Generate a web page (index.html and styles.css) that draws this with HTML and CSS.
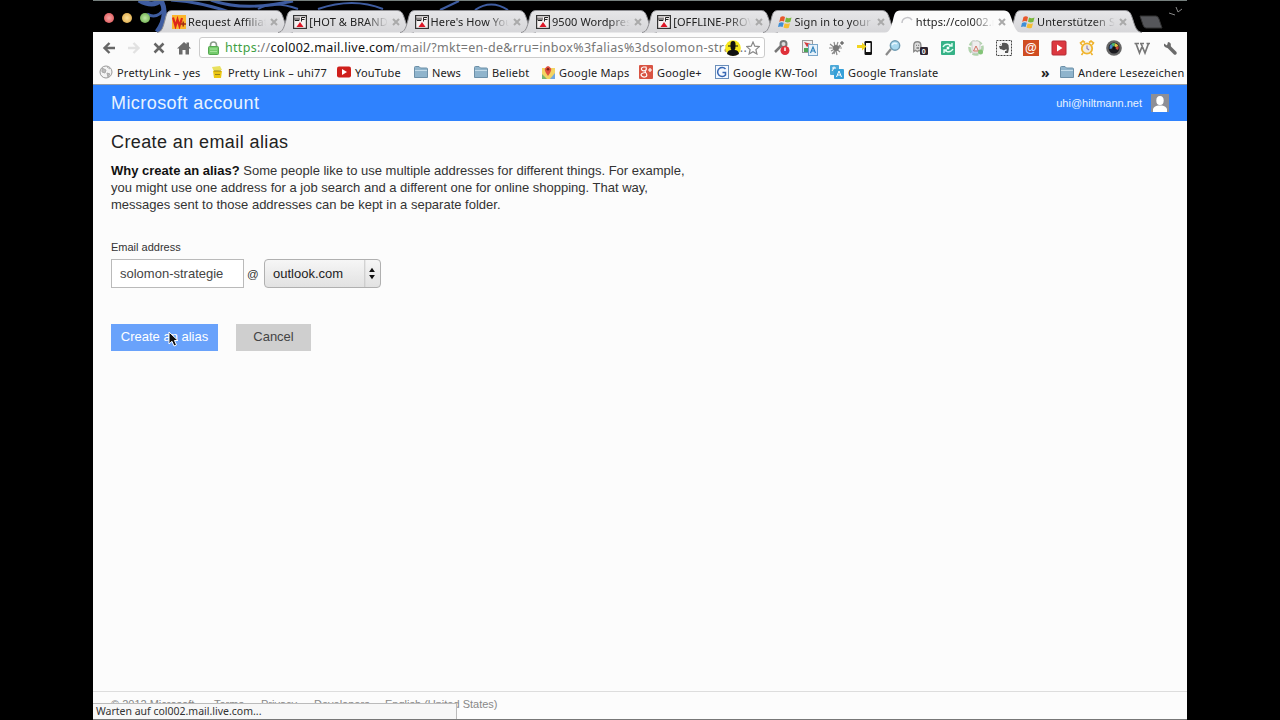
FILE: index.html
```html
<!DOCTYPE html>
<html lang="en">
<head>
  <meta charset="UTF-8" />
  <title>Create an email alias</title>
  <link rel="stylesheet" href="styles.css">
</head>
<body>
  <svg class="defs">
    <linearGradient id="tabFill" x1="0" y1="0" x2="0" y2="1"><stop offset="0" stop-color="#e6e6e8" /><stop offset="1" stop-color="#d6d6d9" /></linearGradient>
    <symbol id="tab" viewBox="0 0 137 23"><path d="M0 22.5C5 22 6 17 8 10C9.500 4 10 .5 15 .5H119C124 .5 125 4 127 10C129 17 131 22 136 22.500" fill="url(#tabFill)" stroke="#8f8f93" /></symbol>
    <symbol id="tabOn" viewBox="0 0 137 23"><path d="M0 23C5 22 6 17 8 10C9.500 4 10 .5 15 .5H119C124 .5 125 4 127 10C129 17 131 22 136 23" fill="#fbfbfb" /></symbol>
    <symbol id="close" viewBox="0 0 8 8"><path d="M1 1L7 7M7 1L1 7" stroke="#aaa" stroke-width="2" /></symbol>
    <symbol id="wf" viewBox="0 0 14 14"><rect x=".6" y=".6" width="12.800" height="12.800" fill="#f6f0f0" stroke="#333" stroke-width="1.200" /><path d="M2 2.500V5.500H6V2.500M4 2.500V5.500M8.500 6.500V2.500H12M8.500 4.500H11.500" stroke="#222" fill="none" /><path d="M7 7L10.500 12H3.500Z" fill="#dd1626" /></symbol>
    <symbol id="win" viewBox="0 0 14 14"><path d="M2.500 2Q5 .5 7 2L6 6.500Q3.500 5.500 1.200 7Z" fill="#e8572b" /><path d="M8 2.500Q10.500 4 13.500 2.500L12.300 7Q9.500 8 7 6.800Z" fill="#79b83c" /><path d="M1 8Q3.500 6.500 5.800 7.800L4.600 12Q2.500 10.800 0 12Z" fill="#3f8ed5" /><path d="M6.700 8.200Q9 9.500 12 8.200L10.800 12.800Q8 14 5.500 12.600Z" fill="#f5bd32" /></symbol>
    <symbol id="folder" viewBox="0 0 14 13"><path d="M.5 12V2Q.5 1 1.500 1H5L6.500 2.500H12.500Q13.500 2.500 13.500 3.500V12Z" fill="#8fb4cc" stroke="#6d90a8" /><path d="M1 5H13" stroke="#c3dbe9" /></symbol>
  </svg>
  <div class="window">
    <div class="tabstrip">
      <svg class="wallpaper" viewBox="0 0 1094 32"><g fill="none" stroke="#3e5ca0" stroke-width="3"><path d="M46 0Q60 8 68 0M64 32Q76 16 68 0" stroke-width="5" /><path d="M54 14Q64 20 72 8M78 0Q110 2 142 14M118 0Q150 12 200 1" /><path d="M165 9Q180 0 205 9M225 9Q260 -3 290 9" stroke-width="2" /><path d="M347 10L366 1M382 10Q398 -1 415 10" stroke-width="2" /></g><path d="M0 .5H1094" stroke="#76807e" /><path d="M1076 13L1082 15M1083 7L1085 12L1089 9" stroke="#888" fill="none" /></svg>
      <div class="lights"><i class="red"></i><i class="yellow"></i><i class="green"></i></div>
      <div class="tabs">
        <div class="tab"><svg class="shape"><use href="#tab" /></svg><svg class="fav" viewBox="0 0 14 14"><rect width="14" height="14" fill="#fbb62c" /><path d="M1 2.500L3.500 11L5.500 4.500L7.500 11L10 3" fill="none" stroke="#dd2719" stroke-width="2.200" /><path d="M8.500 9H14M11.200 6.500V11.500" stroke="#a12e10" stroke-width="1.500" /></svg><span>Request Affiliate</span><svg class="x"><use href="#close" /></svg></div>
        <div class="tab"><svg class="shape"><use href="#tab" /></svg><svg class="fav"><use href="#wf" /></svg><span>[HOT &amp; BRAND N</span><svg class="x"><use href="#close" /></svg></div>
        <div class="tab"><svg class="shape"><use href="#tab" /></svg><svg class="fav"><use href="#wf" /></svg><span>Here's How You</span><svg class="x"><use href="#close" /></svg></div>
        <div class="tab"><svg class="shape"><use href="#tab" /></svg><svg class="fav"><use href="#wf" /></svg><span>9500 Wordpress</span><svg class="x"><use href="#close" /></svg></div>
        <div class="tab"><svg class="shape"><use href="#tab" /></svg><svg class="fav"><use href="#wf" /></svg><span>[OFFLINE-PROVE</span><svg class="x"><use href="#close" /></svg></div>
        <div class="tab"><svg class="shape"><use href="#tab" /></svg><svg class="fav"><use href="#win" /></svg><span>Sign in to your M</span><svg class="x"><use href="#close" /></svg></div>
        <div class="tab active"><svg class="shape"><use href="#tabOn" /></svg><svg class="fav" viewBox="0 0 14 14"><path d="M2 8A5.500 5.500 0 0 1 12 5" fill="none" stroke="#c4c4c8" stroke-width="1.500" /></svg><span>https://col002.m</span><svg class="x"><use href="#close" /></svg></div>
        <div class="tab"><svg class="shape"><use href="#tab" /></svg><svg class="fav"><use href="#win" /></svg><span>Unterstützen Sie</span><svg class="x"><use href="#close" /></svg></div>
      </div>
      <svg class="newtab" viewBox="0 0 24 14"><path d="M1 1H17Q19 1 20 4L23 13H7Q5 13 4 10Z" fill="#55565a" stroke="#333" /></svg>
    </div>
    <div class="toolbar">
      <svg class="nav" viewBox="0 0 14 14"><path d="M13 7H3M7.500 2L2.500 7L7.500 12" fill="none" stroke="#666" stroke-width="2.400" /></svg>
      <svg class="nav" viewBox="0 0 14 14"><path d="M1 7H11M6.500 2L11.500 7L6.500 12" fill="none" stroke="#e2e2e2" stroke-width="2.400" /></svg>
      <svg class="nav" viewBox="0 0 14 14"><path d="M2.500 2.500L11.500 11.500M11.500 2.500L2.500 11.500" stroke="#666" stroke-width="2.500" /></svg>
      <svg class="nav" viewBox="0 0 14 14"><path d="M0 7.500L7 1L9.500 3.300V1.500H12V5.500L14 7.500H12V13.500H8.500V9H5.500V13.500H2V7.500Z" fill="#6b6b6b" /></svg>
      <div class="omnibox">
        <svg class="lock" viewBox="0 0 11 14"><path d="M2.500 7V4Q2.500 1 5.500 1T8.500 4V7" fill="none" stroke="#8c9c8c" stroke-width="1.600" /><rect x=".5" y="5.500" width="10" height="8" rx="1" fill="#74cb6c" stroke="#55a650" /><path d="M2 8H9M2 10.500H9" stroke="#a5e49b" /></svg>
        <div class="url"><span class="secure">https</span>://<b>col002.mail.live.com</b>/mail/?mkt=en-de&amp;rru=inbox%3falias%3dsolomon-strat...</div>
        <svg class="agent" viewBox="0 0 16 16"><circle cx="8" cy="8" r="7.800" fill="#f7e81b" /><path d="M5.500 4Q5.500 1 8 1T10.500 4V5.500H13V6.500H10.500Q10.500 9 9.500 10Q13.500 10 14 14Q8 18 2 14Q2.500 10 6.500 10Q5.500 9 5.500 6.500H3V5.500H5.500Z" fill="#111" /></svg>
        <svg class="star" viewBox="0 0 14 14"><path d="M7 1L8.800 5.200L13.300 5.600L9.900 8.600L10.900 13L7 10.700L3.100 13L4.100 8.600L.7 5.600L5.200 5.200Z" fill="#fff" stroke="#888" stroke-width="1.200" /></svg>
      </div>
      <div class="extensions">
        <svg viewBox="0 0 16 16"><path d="M1 12L8 5" stroke="#777" stroke-width="2.500" /><circle cx="9.500" cy="4" r="3" fill="#ddd" stroke="#777" stroke-width="2" /><circle cx="11" cy="10.500" r="4.500" fill="#df3039" /><path d="M11 7.500V11" stroke="#fff" stroke-width="1.500" /></svg>
        <svg viewBox="0 0 16 16"><rect x=".5" y=".5" width="10" height="12" fill="#eee" stroke="#999" /><path d="M2 2L9 4L5 7Z" fill="#d33b3e" /><path d="M2 8H7V12H2Z" fill="#4ca559" /><rect x="6.500" y="4.500" width="9" height="11" fill="#e8f2fa" stroke="#7aa6c9" /><path d="M8.500 13L11 7L13.500 13M9.500 11H12.500" fill="none" stroke="#3283bb" stroke-width="1.200" /></svg>
        <svg viewBox="0 0 16 16"><path d="M1 4L11 12M2 11L12 6M5 2L8 15M0 8H13M9 2L5 14M3 14L11 5" stroke="#8b8b8b" stroke-width="1.200" /><circle cx="7" cy="8" r="3" fill="#777" /><path d="M13 1V5M11 3H15" stroke="#444" /></svg>
        <svg viewBox="0 0 16 16"><rect x="7.500" y="1" width="7.500" height="14" rx="1.200" fill="#111" /><rect x="9" y="3" width="4.500" height="9" fill="#fff" /><path d="M0 5H5V2.500L9.500 6.500L5 10.500V8H0Z" fill="#f2d520" /></svg>
        <svg viewBox="0 0 16 16"><path d="M1 15L6 9" stroke="#8a8a8a" stroke-width="2.200" /><circle cx="10" cy="5.500" r="4.700" fill="#a9d9ef" stroke="#6e9bb2" stroke-width="1.400" /><path d="M7 5Q9 2 12 4" fill="none" stroke="#e8f7ff" stroke-width="1.500" /></svg>
        <svg viewBox="0 0 18 16" class="ghost"><path d="M2 12V5Q2 1 6 1T10 5V12L8 10.500L6 12L4 10.500Z" fill="#ddd" stroke="#888" stroke-width="1.500" /><path d="M4.500 5H5.500M7 5H8M5 8H8" stroke="#777" stroke-width="1.500" /><rect x="9" y="7" width="9" height="9" rx="1.500" fill="#2d2430" /><text x="11" y="14.500">0</text></svg>
        <svg viewBox="0 0 16 16"><rect x="1" y="1" width="14" height="14" rx="1" fill="#36b287" /><path d="M3 7Q5 3.500 9 4.500L12 6M13 9Q11 12.500 7 11.500L4 10M12 3V6H9M4 13V10H7" fill="none" stroke="#e3fff4" stroke-width="1.400" /><circle cx="8" cy="8" r="1.500" fill="#fff" /></svg>
        <svg viewBox="0 0 16 16"><circle cx="8" cy="8" r="6.500" fill="none" stroke="#b0d3ac" stroke-width="2.600" stroke-dasharray="6 1.500" /><path d="M4 1H10L12 3V13H4Z" fill="#eee" stroke="#ccc" /><path d="M5.500 11L8 6L10.500 11Z" fill="none" stroke="#d37062" /><circle cx="12.500" cy="12" r="2.500" fill="#83c477" /></svg>
        <svg viewBox="0 0 16 16"><rect x=".5" y=".5" width="15" height="15" fill="#f7f7f7" stroke="#444" stroke-dasharray="2 1" /><path d="M3 6L6 3Q11 2 12.500 5Q13.500 9 12 13H9V11H10.500V9Q8 11 6 9.500L4 9Z" fill="#555" /><path d="M3 5.500H5.500V3" stroke="#eee" fill="none" /></svg>
        <svg viewBox="0 0 16 16" class="at"><rect width="16" height="16" fill="#d04d21" /><text x="2" y="12">@</text></svg>
        <svg viewBox="0 0 16 16"><rect x="1" y="1" width="14" height="14" rx="1" fill="#dc3840" stroke="#b52b34" /><path d="M6 4.500L11.500 8L6 11.500Z" fill="#fff" /></svg>
        <svg viewBox="0 0 16 16"><path d="M3 5L1.500 3L4 1L6 2.500M13 5L14.500 3L12 1L10 2.500M4 13L2.500 15M12 13L13.500 15" fill="none" stroke="#efb22c" stroke-width="1.600" /><circle cx="8" cy="8.500" r="5.200" fill="#f1ecdf" stroke="#f1b52e" stroke-width="1.800" /><path d="M8 5.500V8.500L10 10" fill="none" stroke="#9584b5" stroke-width="1.200" /></svg>
        <svg viewBox="0 0 16 16"><circle cx="8" cy="8" r="7.800" fill="#666" /><circle cx="8" cy="8" r="5.500" fill="#1b1b20" /><path d="M8 8L5 4A5 5 0 0 1 9 3Z" fill="#4bb873" /><path d="M8 8L9 3.200A5 5 0 0 1 12.500 6Z" fill="#e3c642" /><path d="M8 8L3.500 9A5 5 0 0 1 5 4Z" fill="#4783cc" /><path d="M8 8L12.500 6A5 5 0 0 1 12 10Z" fill="#c8453b" /><circle cx="8" cy="8" r="1.800" fill="#111" /></svg>
        <svg viewBox="0 0 16 16"><path d="M.5 3.500H5M6 3.500H10M12.500 3.500H16M2 3.500L5.500 13L8.500 5.500M7 3.500L11 13L14.500 3.500" fill="none" stroke="#777" stroke-width="1.700" /></svg>
        <svg viewBox="0 0 16 16"><path d="M6.500 6.500L13 13" stroke="#6b6b6b" stroke-width="3.500" stroke-linecap="round" /><path d="M2 3.500L5 5.500L6 2Q10 2.500 8.500 7Q5 9.500 2 6Z" fill="#6b6b6b" /></svg>
      </div>
    </div>
    <div class="bookmarks">
      <div class="bm b1"><svg viewBox="0 0 14 14"><circle cx="7" cy="7" r="6" fill="#f4f4f4" stroke="#999" /><path d="M3 3L7 5L6 8L3 7ZM8 8L11 9L9 12ZM8 2L11 4" fill="#bbb" stroke="#aaa" /></svg>PrettyLink – yes</div>
      <div class="bm b2"><svg viewBox="0 0 14 14"><path d="M2 2L10 1L12 5L4 7Z" fill="#e9e05e" /><path d="M3 6H12L11 13H4Z" fill="#ecc713" /><path d="M4 6H11M5 9.500H10" stroke="#9b831a" /></svg>Pretty Link – uhi77</div>
      <div class="bm b3"><svg viewBox="0 0 14 14"><rect y="1.500" width="14" height="11" rx="2" fill="#cf1f1b" /><path d="M5 4L10 7L5 10Z" fill="#fff" /></svg>YouTube</div>
      <div class="bm b4"><svg><use href="#folder" /></svg>News</div>
      <div class="bm b5"><svg><use href="#folder" /></svg>Beliebt</div>
      <div class="bm b6"><svg viewBox="0 0 14 14"><rect x="1" y="3" width="13" height="11" fill="#f3d463" /><path d="M1 9L6 14H1Z" fill="#7ab671" /><path d="M9 14L14 8V14Z" fill="#71a7e3" /><path d="M7 11Q3 6 4 3.500Q7 -1.500 10 3.500Q11 6 7 11Z" fill="#e05040" /><circle cx="7" cy="4.200" r="1.300" fill="#7b1f18" /></svg>Google Maps</div>
      <div class="bm b7"><svg viewBox="0 0 14 14"><rect width="14" height="14" rx="1" fill="#d95443" /><path d="M7.500 2H4.500Q2 2.500 2.500 4.500Q3.500 6.500 6 5.500L6.500 7.500Q2 8 2 10Q3 12.500 6 12T7 8M7 2.500Q8 5 6 5.500M9 5H13M11 3V7" fill="none" stroke="#fff" stroke-width="1.200" /></svg>Google+</div>
      <div class="bm b8"><svg viewBox="0 0 14 14"><rect x=".5" y=".5" width="13" height="13" fill="#f5f9ff" stroke="#6b8fba" /><path d="M10.500 4A4.500 4.500 0 1 0 10.500 10V7.500H7.500" fill="none" stroke="#3767b4" stroke-width="1.500" /></svg>Google KW-Tool</div>
      <div class="bm b9"><svg viewBox="0 0 14 14"><rect width="9" height="10" rx="1" fill="#4ca8d8" /><rect x="4" y="4" width="10" height="10" rx="1" fill="#37a0d8" /><path d="M6.500 12L9 6L11.500 12M7.500 10H10.500M2 3H6M4 1.500V3L2 6" fill="none" stroke="#fff" /></svg>Google Translate</div>
      <div class="more">»</div>
      <div class="bm b10"><svg><use href="#folder" /></svg>Andere Lesezeichen</div>
    </div>

    <header>
      <h1>Microsoft account</h1>
      <span class="user">uhi@hiltmann.net</span>
      <svg class="avatar" viewBox="0 0 18 18"><rect width="18" height="18" fill="#8e8f96" /><ellipse cx="9" cy="6.500" rx="3.700" ry="4.500" fill="#fff" /><path d="M2 18V15Q3 12 7 11.500H11Q15 12 16 15V18Z" fill="#fff" /></svg>
    </header>
    <main>
      <h2>Create an email alias</h2>
      <p class="why"><b>Why create an alias?</b> <span class="l1">Some people like to use multiple addresses for different things. For example,</span><br>
        <span class="l2">you might use one address for a job search and a different one for online shopping. That way,</span><br>
        <span class="l3">messages sent to those addresses can be kept in a separate folder.</span></p>
      <label for="alias">Email address</label>
      <div class="row">
        <input type="text" id="alias" value="solomon-strategie" />
        <span class="at-sign">@</span>
        <div class="select">outlook.com<svg viewBox="0 0 16 28"><path d="M.5 0V28" stroke="#c4c4c4" /><path d="M5 12.500L8 8L11 12.500ZM5 15.500L8 20L11 15.500Z" fill="#111" /></svg></div>
      </div>
      <div class="buttons">
        <button class="create">Create an alias</button>
        <button class="cancel">Cancel</button>
      </div>
    </main>
    <footer>
      <span class="f1">© 2012 Microsoft</span><span class="f2">Terms</span><span class="f3">Privacy</span><span class="f4">Developers</span><span class="f5">English (United States)</span>
    </footer>
    <div class="status">Warten auf col002.mail.live.com...</div>
    <svg class="cursor" viewBox="0 0 11 16"><path d="M1 1V13L4 10.300L6 15L8.500 14L6.500 9.500H10Z" fill="#111" stroke="#fff" /></svg>
  </div>
</body>
</html>
```
FILE: styles.css
```css
* {
  box-sizing: border-box;
}
body {
  margin: 0;
  background: #000;
  overflow: hidden;
  font-family: "Liberation Sans", Arial, sans-serif;
}
.defs {
  display: block;
  width: 0;
  height: 0;
}
.window {
  position: relative;
  display: flex;
  flex-direction: column;
  width: 1094px;
  height: 720px;
  margin-left: 93px;
  background: #fcfcfc;
  border-bottom: 1px solid #777;
}
svg {
  display: block;
  flex: none;
}

/* browser chrome */
.tabstrip {
  position: relative;
  display: flex;
  height: 32px;
  padding-top: 10px;
  background: #000;
}
.wallpaper {
  position: absolute;
  left: 0;
  top: 0;
  width: 1094px;
  height: 32px;
}
.lights {
  position: relative;
  display: flex;
  gap: 8px;
  width: 64px;
  padding: 3px 0 0 11px;
}
.lights i {
  width: 10px;
  height: 10px;
  border-radius: 50%;
}
.red { background: radial-gradient(#f7a5a5, #d9494b); }
.yellow { background: radial-gradient(#fbe09a, #d9a13a); }
.green { background: radial-gradient(#bfe8a5, #5fa53f); }
.tabs {
  display: flex;
  position: relative;
}
.tab {
  position: relative;
  display: flex;
  align-items: center;
  width: 121.300px;
  height: 23px;
  padding-left: 15px;
}
.tab.active {
  z-index: 2;
}
.shape {
  position: absolute;
  left: 0;
  top: 0;
  width: 137px;
  height: 23px;
}
.fav {
  position: relative;
  width: 14px;
  height: 14px;
  margin-right: 2px;
}
.tab span {
  position: relative;
  width: 79px;
  overflow: hidden;
  white-space: nowrap;
  font: 11px "Noto Sans", sans-serif;
  letter-spacing: 0.100px;
  color: #222;
  -webkit-mask-image: linear-gradient(to right, #000 72%, transparent);
  mask-image: linear-gradient(to right, #000 72%, transparent);
}
.x {
  position: relative;
  width: 8px;
  height: 8px;
  margin-left: 4px;
}
.newtab {
  position: relative;
  width: 24px;
  height: 14px;
  margin: 5px 0 0 12px;
}
.toolbar {
  display: flex;
  align-items: center;
  height: 31px;
  padding-left: 9px;
  background: #fbfbfb;
}
.nav {
  width: 14px;
  height: 14px;
  margin-right: 11px;
}
.omnibox {
  display: flex;
  align-items: center;
  width: 566px;
  height: 21px;
  margin-left: -3px;
  padding-left: 8px;
  background: #fff;
  border: 1px solid #ccc;
  border-radius: 3px;
}
.lock {
  width: 11px;
  height: 14px;
}
.url {
  width: 498px;
  margin-left: 6px;
  white-space: nowrap;
  font: 12.500px "Noto Sans", sans-serif;
  letter-spacing: 0.300px;
  color: #777;
}
.url b {
  font-weight: normal;
  color: #111;
}
.url .secure {
  color: #3f9f43;
}
.agent {
  width: 16px;
  height: 16px;
  margin-left: 2px;
}
.star {
  width: 14px;
  height: 14px;
  margin-left: 5px;
}
.extensions {
  display: flex;
  margin-left: 9px;
  gap: 11.700px;
}
.extensions svg {
  width: 16px;
  height: 16px;
}
.extensions .ghost {
  overflow: visible;
}
.ghost text {
  font: bold 8px "Liberation Sans", sans-serif;
  fill: #fff;
}
.at text {
  font: bold 12px "Liberation Sans", sans-serif;
  fill: #fff;
}
.bookmarks {
  display: flex;
  align-items: center;
  height: 22px;
  padding: 0 0 3px 6px;
  background: #fbfbfb;
  border-bottom: 1px solid #9aa0a8;
  font: 11px "Noto Sans", sans-serif;
  letter-spacing: 0.200px;
  color: #222;
}
.bm {
  display: flex;
  align-items: center;
  gap: 4px;
  white-space: nowrap;
}
.bm svg {
  width: 14px;
  height: 14px;
}
.b1 { width: 111px; }
.b2 { width: 127px; }
.b3 { width: 77px; }
.b4 { width: 60px; }
.b5 { width: 67px; }
.b6 { width: 98px; }
.b7 { width: 76px; }
.b8 { width: 115px; }
.b9 { width: 211px; }
.more {
  width: 19px;
  font-size: 14px;
  font-weight: bold;
}

/* page */
header {
  display: flex;
  align-items: center;
  height: 36px;
  padding: 0 18px;
  background: #2f82fe;
  color: #e8f3ff;
}
header h1 {
  flex: 1;
  margin: 0;
  font-size: 18px;
  font-weight: normal;
  letter-spacing: 0.430px;
}
.user {
  font-size: 11px;
}
.avatar {
  width: 18px;
  height: 18px;
  margin-left: 9px;
}
main {
  flex: 1;
  padding: 10px 18px 0;
  color: #333;
}
main h2 {
  margin: 0;
  font-size: 18px;
  line-height: 22px;
  font-weight: normal;
  letter-spacing: 0.400px;
  color: #222;
}
.why {
  margin: 9px 0 0;
  font-size: 13px;
  line-height: 17px;
  white-space: nowrap;
}
.why b {
  color: #111;
}
label {
  display: block;
  margin-top: 27px;
  font-size: 11px;
  line-height: 14px;
}
.row {
  display: flex;
  align-items: center;
  margin-top: 5px;
}
input[type="text"] {
  width: 133px;
  height: 29px;
  padding: 0 8px;
  border: 1px solid #bababa;
  background: #fff;
  font: 13px "Liberation Sans", Arial, sans-serif;
  color: #444;
}
.at-sign {
  width: 20px;
  padding-left: 3px;
  font-size: 11.500px;
}
.select {
  display: flex;
  align-items: center;
  justify-content: space-between;
  width: 117px;
  height: 29px;
  padding-left: 8px;
  border: 1px solid #b0b0b0;
  border-radius: 4px;
  background: linear-gradient(#f6f6f6, #e2e2e2);
  font-size: 13px;
  color: #222;
}
.select svg {
  width: 16px;
  height: 27px;
}
.buttons {
  display: flex;
  gap: 18px;
  margin-top: 36px;
}
button {
  height: 27px;
  padding: 0 0 3px;
  border: none;
  font: 13px "Liberation Sans", Arial, sans-serif;
}
.create {
  width: 107px;
  background: #69a2fb;
  color: #fff;
}
.cancel {
  width: 75px;
  background: #cfcfcf;
  color: #444;
}
footer {
  display: flex;
  height: 28px;
  padding: 5px 0 0 18px;
  border-top: 1px solid #ddd;
  font-size: 11px;
  line-height: 14px;
  color: #888;
}
.f1 { width: 103px; }
.f2 { width: 47px; }
.f3 { width: 53px; }
.f4 { width: 71px; }
.status {
  position: absolute;
  left: 0;
  bottom: 0;
  width: 364px;
  height: 16px;
  padding-left: 3px;
  background: #f7f7f7;
  border: 1px solid #bbb;
  border-width: 1px 1px 0 0;
  font: 10.500px/14px "Noto Sans", sans-serif;
  color: #333;
}
.cursor {
  position: absolute;
  left: 75px;
  top: 331px;
  width: 11px;
  height: 16px;
}
```
